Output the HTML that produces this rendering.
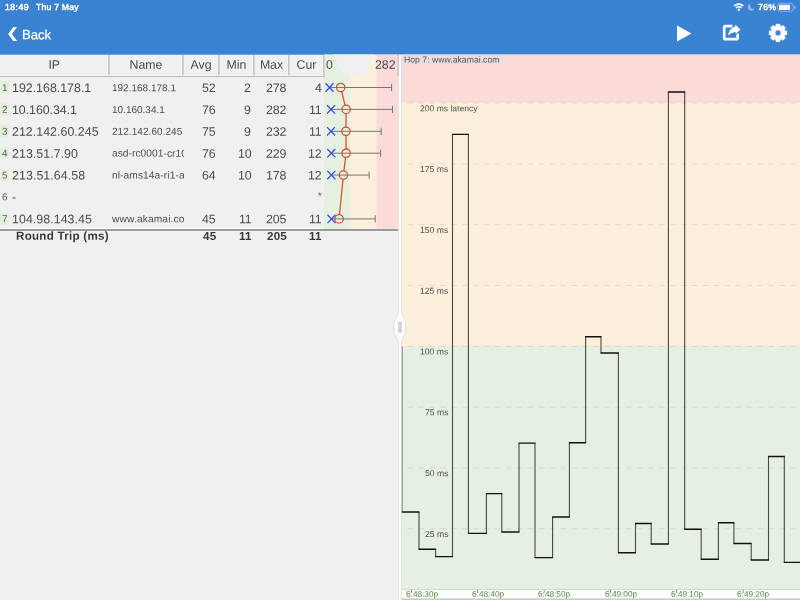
<!DOCTYPE html>
<html lang="en"><head><meta charset="utf-8"><title>Hop 7: www.akamai.com</title>
<style>
html,body{margin:0;padding:0;}
body{width:800px;height:600px;overflow:hidden;background:#f0f0f0;font-family:"Liberation Sans",sans-serif;position:relative;color:#4a4a4a;}
.abs{position:absolute;white-space:nowrap;}
.hop{left:0;width:9.1px;height:12.6px;border-radius:0 2px 2px 0;background:#e4f0dc;font-size:10px;line-height:13.4px;text-align:center;color:#666;}
svg{position:absolute;left:0;top:0;}
.t{position:absolute;top:0;white-space:nowrap;line-height:14px;}
#txt{position:absolute;left:0;top:0;width:800px;height:600px;will-change:transform;}
</style></head>
<body>
<svg width="800" height="600" viewBox="0 0 800 600">
<rect x="0" y="0" width="800" height="54.7" fill="#3a82d2"/>
<rect x="324" y="54.5" width="25.8" height="174.5" fill="#e6f0e0"/>
<rect x="349.8" y="54.5" width="26.7" height="174.5" fill="#fcefdc"/>
<rect x="376.5" y="54.5" width="21.5" height="174.5" fill="#fadbd8"/>
<polygon points="333,54.5 373.8,54.5 365,75.2 343.8,75.2" fill="#f0f0f0"/>
<rect x="107.3" y="55.2" width="1" height="20.8" fill="#f8f8f8"/>
<rect x="108.3" y="55.2" width="1.2" height="21" fill="#b6b6b6"/>
<rect x="181.3" y="55.2" width="1" height="20.8" fill="#f8f8f8"/>
<rect x="182.3" y="55.2" width="1.2" height="21" fill="#b6b6b6"/>
<rect x="217.3" y="55.2" width="1" height="20.8" fill="#f8f8f8"/>
<rect x="218.3" y="55.2" width="1.2" height="21" fill="#b6b6b6"/>
<rect x="252.3" y="55.2" width="1" height="20.8" fill="#f8f8f8"/>
<rect x="253.3" y="55.2" width="1.2" height="21" fill="#b6b6b6"/>
<rect x="287.3" y="55.2" width="1" height="20.8" fill="#f8f8f8"/>
<rect x="288.3" y="55.2" width="1.2" height="21" fill="#b6b6b6"/>
<rect x="322.3" y="55.2" width="1" height="20.8" fill="#f8f8f8"/>
<rect x="323.3" y="55.2" width="1.2" height="21" fill="#b6b6b6"/>
<rect x="0" y="75.3" width="323.5" height="1" fill="#f6f6f6"/>
<rect x="0" y="76.1" width="324.5" height="1.2" fill="#b6b6b6"/>
<rect x="0" y="77.3" width="323.5" height="1" fill="#f6f6f6"/>
<rect x="0" y="228" width="324" height="1.4" fill="#f8f8f8"/>
<rect x="0" y="229.4" width="398" height="1.4" fill="#666"/>
<rect x="0" y="230.8" width="398" height="0.7" fill="#f8f8f8"/>
<rect x="401.5" y="54.5" width="398.5" height="48.3" fill="#fadbd8"/>
<rect x="401.5" y="102.8" width="398.5" height="243.5" fill="#fcefdc"/>
<rect x="401.5" y="346.3" width="398.5" height="243.1" fill="#e6f0e0"/>
<rect x="401.5" y="589.4" width="398.5" height="10.6" fill="#fff"/>
<rect x="401.5" y="589" width="398.5" height="0.8" fill="#c8d0c4"/>
<rect x="401.5" y="598.6" width="398.5" height="1" fill="#aaa"/>
<rect x="401.5" y="54.7" width="100.6" height="9.2" fill="#e4dede"/>
<line x1="407.4" y1="528.8" x2="796.2" y2="528.8" stroke="rgba(110,110,110,0.17)" stroke-width="1" stroke-dasharray="5.6 5.34"/>
<line x1="407.4" y1="468.0" x2="796.2" y2="468.0" stroke="rgba(110,110,110,0.17)" stroke-width="1" stroke-dasharray="5.6 5.34"/>
<line x1="407.4" y1="407.2" x2="796.2" y2="407.2" stroke="rgba(110,110,110,0.17)" stroke-width="1" stroke-dasharray="5.6 5.34"/>
<line x1="407.4" y1="346.4" x2="796.2" y2="346.4" stroke="rgba(110,110,110,0.17)" stroke-width="1" stroke-dasharray="5.6 5.34"/>
<line x1="407.4" y1="285.5" x2="796.2" y2="285.5" stroke="rgba(110,110,110,0.17)" stroke-width="1" stroke-dasharray="5.6 5.34"/>
<line x1="407.4" y1="224.7" x2="796.2" y2="224.7" stroke="rgba(110,110,110,0.17)" stroke-width="1" stroke-dasharray="5.6 5.34"/>
<line x1="407.4" y1="163.9" x2="796.2" y2="163.9" stroke="rgba(110,110,110,0.17)" stroke-width="1" stroke-dasharray="5.6 5.34"/>
<line x1="407.4" y1="103.1" x2="796.2" y2="103.1" stroke="rgba(110,110,110,0.17)" stroke-width="1" stroke-dasharray="5.6 5.34"/>
<rect x="411.0" y="589.7" width="0.9" height="3.1" fill="#808080"/>
<rect x="477.3" y="589.7" width="0.9" height="3.1" fill="#808080"/>
<rect x="543.7" y="589.7" width="0.9" height="3.1" fill="#808080"/>
<rect x="610.0" y="589.7" width="0.9" height="3.1" fill="#808080"/>
<rect x="676.3" y="589.7" width="0.9" height="3.1" fill="#808080"/>
<rect x="742.6" y="589.7" width="0.9" height="3.1" fill="#808080"/>
<path d="M401.9,346.5V512M419,512V549.2M435.6,549.2V556.6M452.5,556.6V134.4M468.4,134.4V533.4M486.4,533.4V493.6M501.8,493.6V532M519,532V443.1M535,443.1V557.6M552.6,557.6V517M569.4,517V442.7M585.6,442.7V336.8M601,336.8V353M618.4,353V552.8M635.5,552.8V523.5M651.2,523.5V544M668.4,544V92M684.7,92V529.3M701.2,529.3V559.2M718.4,559.2V522.7M733.9,522.7V543.5M751.2,543.5V560M768.5,560V456.5M784.3,456.5V562.4" stroke="#484848" stroke-width="1.1" fill="none"/>
<path d="M401.4,512H419.5M418.5,549.2H436.1M435.1,556.6H453.0M452.0,134.4H468.9M467.9,533.4H486.9M485.9,493.6H502.3M501.3,532H519.5M518.5,443.1H535.5M534.5,557.6H553.1M552.1,517H569.9M568.9,442.7H586.1M585.1,336.8H601.5M600.5,353H618.9M617.9,552.8H636.0M635.0,523.5H651.7M650.7,544H668.9M667.9,92H685.2M684.2,529.3H701.7M700.7,559.2H718.9M717.9,522.7H734.4M733.4,543.5H751.7M750.7,560H769.0M768.0,456.5H784.8M783.8,562.4H801.5" stroke="#111" stroke-width="1.4" fill="none"/>
<rect x="398.6" y="54.7" width="2.9" height="545.3" fill="#fcfcfc"/>
<rect x="401.2" y="54.5" width="0.6" height="545.5" fill="#d4d4d4"/>
<rect x="398" y="76.3" width="0.7" height="524" fill="#dedede"/>
<rect x="397.6" y="55" width="1" height="21.3" fill="#b4b4b4"/>
<path d="M398.3,310.5 C398.3,316.5 393.8,317.5 393.8,327 C393.8,336.5 398.3,337.5 398.3,343.5 L401.5,343.5 C401.5,337.5 406,336.5 406,327 C406,317.5 401.5,316.5 401.5,310.5 Z" fill="#fbfbfb"/>
<path d="M398.3,310.5 C398.3,316.5 393.8,317.5 393.8,327 C393.8,336.5 398.3,337.5 398.3,343.5 M401.5,343.5 C401.5,337.5 406,336.5 406,327 C406,317.5 401.5,316.5 401.5,310.5" fill="none" stroke="#d6d6d6" stroke-width="0.7"/>
<rect x="398.2" y="322" width="3.6" height="10.5" fill="#d2d2d2"/>
<path d="M329.5,87.5H391.6M391.6,83.9V91.1" stroke="#777" stroke-width="1" fill="none"/>
<path d="M331.0,109.4H392.5M392.5,105.8V113.0" stroke="#777" stroke-width="1" fill="none"/>
<path d="M331.0,131.3H381.2M381.2,127.7V134.9" stroke="#777" stroke-width="1" fill="none"/>
<path d="M331.3,153.2H380.6M380.6,149.6V156.8" stroke="#777" stroke-width="1" fill="none"/>
<path d="M331.3,175.1H369.1M369.1,171.5V178.7" stroke="#777" stroke-width="1" fill="none"/>
<path d="M331.5,218.9H375.2M375.2,215.3V222.5" stroke="#777" stroke-width="1" fill="none"/>
<path d="M341.7,91.6L345.1,105.3M346.1,113.6L345.9,127.1M345.9,135.5L346.1,149.0M345.6,157.4L343.9,170.9M343.0,179.3L339.5,214.7" stroke="#e0502c" stroke-width="1.3" fill="none"/>
<path d="M325.5,83.3L333.5,91.7M325.5,91.7L333.5,83.3" stroke="#2a4cf0" stroke-width="1.25" fill="none"/>
<path d="M327.0,105.2L335.0,113.6M327.0,113.6L335.0,105.2" stroke="#2a4cf0" stroke-width="1.25" fill="none"/>
<path d="M327.0,127.1L335.0,135.5M327.0,135.5L335.0,127.1" stroke="#2a4cf0" stroke-width="1.25" fill="none"/>
<path d="M327.3,149.0L335.3,157.4M327.3,157.4L335.3,149.0" stroke="#2a4cf0" stroke-width="1.25" fill="none"/>
<path d="M327.3,170.9L335.3,179.3M327.3,179.3L335.3,170.9" stroke="#2a4cf0" stroke-width="1.25" fill="none"/>
<path d="M327.5,214.7L335.5,223.1M327.5,223.1L335.5,214.7" stroke="#2a4cf0" stroke-width="1.25" fill="none"/>
<circle cx="340.7" cy="87.5" r="4.2" fill="none" stroke="#e0502c" stroke-width="1.3"/>
<circle cx="346.1" cy="109.4" r="4.2" fill="none" stroke="#e0502c" stroke-width="1.3"/>
<circle cx="345.9" cy="131.3" r="4.2" fill="none" stroke="#e0502c" stroke-width="1.3"/>
<circle cx="346.1" cy="153.2" r="4.2" fill="none" stroke="#e0502c" stroke-width="1.3"/>
<circle cx="343.4" cy="175.1" r="4.2" fill="none" stroke="#e0502c" stroke-width="1.3"/>
<circle cx="339.1" cy="218.9" r="4.2" fill="none" stroke="#e0502c" stroke-width="1.3"/>
<polygon points="13.3,27.1 17.1,27.1 11.9,34.05 17.1,41 13.3,41 8.2,34.05" fill="#fff"/>
<polygon points="677,25.5 677,41.5 691.5,33.5" fill="#fff"/>
<path d="M732.6,26.2 H725.4 Q724.2,26.2 724.2,27.4 V38 Q724.2,39.2 725.4,39.2 H736.4 Q737.6,39.2 737.6,38 V33.6" fill="none" stroke="#fff" stroke-width="2.7"/>
<path d="M728.1,35.6 C728.8,30.8 731.4,27.4 735.4,26.6 L735.4,24.6 L740.4,29.4 L735.8,34 L735.8,32.2 C732.8,32 730.4,33.2 728.1,35.6 Z" fill="#fff" stroke="#3a82d2" stroke-width="1.6" paint-order="stroke"/>
<path d="M784.86,30.70 L786.87,30.87 L786.87,34.93 L784.86,35.10 L784.40,36.20 L785.71,37.74 L782.84,40.61 L781.30,39.30 L780.20,39.76 L780.03,41.77 L775.97,41.77 L775.80,39.76 L774.70,39.30 L773.16,40.61 L770.29,37.74 L771.60,36.20 L771.14,35.10 L769.13,34.93 L769.13,30.87 L771.14,30.70 L771.60,29.60 L770.29,28.06 L773.16,25.19 L774.70,26.50 L775.80,26.04 L775.97,24.03 L780.03,24.03 L780.20,26.04 L781.30,26.50 L782.84,25.19 L785.71,28.06 L784.40,29.60 Z M780.8,32.9 A2.8,2.8 0 1,0 775.2,32.9 A2.8,2.8 0 1,0 780.8,32.9 Z" fill="#fff" fill-rule="evenodd" stroke="#fff" stroke-width="0.4" stroke-linejoin="round"/>
<g fill="none" stroke="#fff" stroke-linecap="butt"><path d="M734.2,6 A6.6,6.6 0 0,1 743.4,6" stroke-width="1.7"/><path d="M736,8 A4,4 0 0,1 741.6,8" stroke-width="1.6"/></g><circle cx="738.8" cy="9.8" r="1.2" fill="#fff"/>
<path d="M750.3,3.8 A3.5,3.5 0 1,0 754.4,8.6 A3.6,3.6 0 0,1 750.3,3.8 Z" fill="#8fb6e6"/>
<rect x="777.6" y="3.3" width="15.6" height="8" rx="2.2" fill="none" stroke="#9fc0ea" stroke-width="0.8"/><rect x="778.9" y="4.7" width="11.2" height="5.3" rx="1.2" fill="#fff"/><rect x="794.3" y="5.8" width="1.2" height="3" rx="0.6" fill="#9fc0ea"/>
</svg>
<div id="txt">
<div class="t" style="font-size:8.8px;color:#fff;left:4.50px;transform:matrix(1,0.0005,0,1,0,-0.05);letter-spacing:0.42px;-webkit-text-stroke:0.45px #fff;">18:49</div>
<div class="t" style="font-size:8.6px;color:#fff;left:36.10px;transform:matrix(1,0.0005,0,1,0,0.02);letter-spacing:0.24px;-webkit-text-stroke:0.45px #fff;">Thu 7 May</div>
<div class="t" style="font-size:8.7px;color:#fff;left:758.00px;transform:matrix(1,0.0005,0,1,0,-0.01);letter-spacing:0.3px;-webkit-text-stroke:0.45px #fff;">76%</div>
<div class="t" style="font-size:13.2px;color:#fff;left:21.90px;transform:matrix(1,0.0005,0,1,0,28.13);letter-spacing:-0.1px;-webkit-text-stroke:0.25px #fff;">Back</div>
<div class="t" style="font-size:12.3px;color:#4a4a4a;left:0.00px;width:108.50px;text-align:center;transform:matrix(1,0.0005,0,1,0,57.64);">IP</div>
<div class="t" style="font-size:12.3px;color:#4a4a4a;left:108.50px;width:74.00px;text-align:center;transform:matrix(1,0.0005,0,1,0,57.64);">Name</div>
<div class="t" style="font-size:12.3px;color:#4a4a4a;left:182.50px;width:36.00px;text-align:center;transform:matrix(1,0.0005,0,1,0,57.64);">Avg</div>
<div class="t" style="font-size:12.3px;color:#4a4a4a;left:218.50px;width:35.00px;text-align:center;transform:matrix(1,0.0005,0,1,0,57.64);">Min</div>
<div class="t" style="font-size:12.3px;color:#4a4a4a;left:253.50px;width:35.00px;text-align:center;transform:matrix(1,0.0005,0,1,0,57.64);">Max</div>
<div class="t" style="font-size:12.3px;color:#4a4a4a;left:288.50px;width:35.00px;text-align:center;transform:matrix(1,0.0005,0,1,0,57.64);">Cur</div>
<div class="t" style="font-size:12.3px;color:#4a4a4a;left:325.80px;transform:matrix(1,0.0005,0,1,0,57.64);">0</div>
<div class="t" style="font-size:12.3px;color:#4a4a4a;left:375.40px;transform:matrix(1,0.0005,0,1,0,57.64);">282</div>
<div class="abs hop" style="top:81.2px;"></div>
<div class="t" style="font-size:9.9px;color:#5c5c5c;left:0.00px;width:9.40px;text-align:center;transform:matrix(1,0.0005,0,1,0,81.02);">1</div>
<div class="t" style="font-size:12.4px;color:#4a4a4a;left:12.00px;transform:matrix(1,0.0005,0,1,0,81.10);letter-spacing:0.0px;">192.168.178.1</div>
<div class="t" style="font-size:10px;color:#4a4a4a;left:111.60px;transform:matrix(1,0.0005,0,1,0,81.14);width:72px;overflow:hidden;letter-spacing:0px;">192.168.178.1</div>
<div class="t" style="font-size:12.35px;color:#4a4a4a;right:584.00px;transform:matrix(1,0.0005,0,1,0,81.12);letter-spacing:-0.1px;">52</div>
<div class="t" style="font-size:12.35px;color:#4a4a4a;right:548.80px;transform:matrix(1,0.0005,0,1,0,81.12);letter-spacing:-0.1px;">2</div>
<div class="t" style="font-size:12.35px;color:#4a4a4a;right:513.50px;transform:matrix(1,0.0005,0,1,0,81.12);letter-spacing:-0.1px;">278</div>
<div class="t" style="font-size:12.35px;color:#4a4a4a;right:478.50px;transform:matrix(1,0.0005,0,1,0,81.12);letter-spacing:-0.1px;">4</div>
<div class="abs hop" style="top:103.1px;"></div>
<div class="t" style="font-size:9.9px;color:#5c5c5c;left:0.00px;width:9.40px;text-align:center;transform:matrix(1,0.0005,0,1,0,102.87);">2</div>
<div class="t" style="font-size:12.4px;color:#4a4a4a;left:12.00px;transform:matrix(1,0.0005,0,1,0,102.95);letter-spacing:-0.05px;">10.160.34.1</div>
<div class="t" style="font-size:10px;color:#4a4a4a;left:111.60px;transform:matrix(1,0.0005,0,1,0,102.98);width:72px;overflow:hidden;letter-spacing:0px;">10.160.34.1</div>
<div class="t" style="font-size:12.35px;color:#4a4a4a;right:584.00px;transform:matrix(1,0.0005,0,1,0,102.97);letter-spacing:-0.1px;">76</div>
<div class="t" style="font-size:12.35px;color:#4a4a4a;right:548.80px;transform:matrix(1,0.0005,0,1,0,102.97);letter-spacing:-0.1px;">9</div>
<div class="t" style="font-size:12.35px;color:#4a4a4a;right:513.50px;transform:matrix(1,0.0005,0,1,0,102.97);letter-spacing:-0.1px;">282</div>
<div class="t" style="font-size:12.35px;color:#4a4a4a;right:478.50px;transform:matrix(1,0.0005,0,1,0,102.97);letter-spacing:-0.1px;">11</div>
<div class="abs hop" style="top:125.0px;"></div>
<div class="t" style="font-size:9.9px;color:#5c5c5c;left:0.00px;width:9.40px;text-align:center;transform:matrix(1,0.0005,0,1,0,124.72);">3</div>
<div class="t" style="font-size:12.4px;color:#4a4a4a;left:11.60px;transform:matrix(1,0.0005,0,1,0,124.80);letter-spacing:0.03px;">212.142.60.245</div>
<div class="t" style="font-size:10px;color:#4a4a4a;left:111.60px;transform:matrix(1,0.0005,0,1,0,124.84);width:72px;overflow:hidden;letter-spacing:0.06px;">212.142.60.245</div>
<div class="t" style="font-size:12.35px;color:#4a4a4a;right:584.00px;transform:matrix(1,0.0005,0,1,0,124.82);letter-spacing:-0.1px;">75</div>
<div class="t" style="font-size:12.35px;color:#4a4a4a;right:548.80px;transform:matrix(1,0.0005,0,1,0,124.82);letter-spacing:-0.1px;">9</div>
<div class="t" style="font-size:12.35px;color:#4a4a4a;right:513.50px;transform:matrix(1,0.0005,0,1,0,124.82);letter-spacing:-0.1px;">232</div>
<div class="t" style="font-size:12.35px;color:#4a4a4a;right:478.50px;transform:matrix(1,0.0005,0,1,0,124.82);letter-spacing:-0.1px;">11</div>
<div class="abs hop" style="top:146.9px;"></div>
<div class="t" style="font-size:9.9px;color:#5c5c5c;left:0.00px;width:9.40px;text-align:center;transform:matrix(1,0.0005,0,1,0,146.57);">4</div>
<div class="t" style="font-size:12.4px;color:#4a4a4a;left:11.60px;transform:matrix(1,0.0005,0,1,0,146.65);letter-spacing:0.05px;">213.51.7.90</div>
<div class="t" style="font-size:10.2px;color:#4a4a4a;left:111.60px;transform:matrix(1,0.0005,0,1,0,146.62);width:72px;overflow:hidden;letter-spacing:0.05px;">asd-rc0001-cr101</div>
<div class="t" style="font-size:12.35px;color:#4a4a4a;right:584.00px;transform:matrix(1,0.0005,0,1,0,146.67);letter-spacing:-0.1px;">76</div>
<div class="t" style="font-size:12.35px;color:#4a4a4a;right:548.80px;transform:matrix(1,0.0005,0,1,0,146.67);letter-spacing:-0.1px;">10</div>
<div class="t" style="font-size:12.35px;color:#4a4a4a;right:513.50px;transform:matrix(1,0.0005,0,1,0,146.67);letter-spacing:-0.1px;">229</div>
<div class="t" style="font-size:12.35px;color:#4a4a4a;right:478.50px;transform:matrix(1,0.0005,0,1,0,146.67);letter-spacing:-0.1px;">12</div>
<div class="abs hop" style="top:168.8px;"></div>
<div class="t" style="font-size:9.9px;color:#5c5c5c;left:0.00px;width:9.40px;text-align:center;transform:matrix(1,0.0005,0,1,0,168.42);">5</div>
<div class="t" style="font-size:12.4px;color:#4a4a4a;left:11.60px;transform:matrix(1,0.0005,0,1,0,168.50);letter-spacing:0.07px;">213.51.64.58</div>
<div class="t" style="font-size:10.2px;color:#4a4a4a;left:111.60px;transform:matrix(1,0.0005,0,1,0,168.47);width:72px;overflow:hidden;letter-spacing:0.09px;">nl-ams14a-ri1-ae</div>
<div class="t" style="font-size:12.35px;color:#4a4a4a;right:584.00px;transform:matrix(1,0.0005,0,1,0,168.52);letter-spacing:-0.1px;">64</div>
<div class="t" style="font-size:12.35px;color:#4a4a4a;right:548.80px;transform:matrix(1,0.0005,0,1,0,168.52);letter-spacing:-0.1px;">10</div>
<div class="t" style="font-size:12.35px;color:#4a4a4a;right:513.50px;transform:matrix(1,0.0005,0,1,0,168.52);letter-spacing:-0.1px;">178</div>
<div class="t" style="font-size:12.35px;color:#4a4a4a;right:478.50px;transform:matrix(1,0.0005,0,1,0,168.52);letter-spacing:-0.1px;">12</div>
<div class="abs hop" style="top:190.7px;background:none;"></div>
<div class="t" style="font-size:9.9px;color:#5c5c5c;left:0.00px;width:9.40px;text-align:center;transform:matrix(1,0.0005,0,1,0,190.27);">6</div>
<div class="t" style="font-size:12.4px;color:#4a4a4a;left:12.20px;transform:matrix(1,0.0005,0,1,0,190.35);letter-spacing:0px;">-</div>
<div class="t" style="font-size:9.5px;color:#4a4a4a;right:478.80px;transform:matrix(1,0.0005,0,1,0,189.06);">*</div>
<div class="abs hop" style="top:212.6px;"></div>
<div class="t" style="font-size:9.9px;color:#5c5c5c;left:0.00px;width:9.40px;text-align:center;transform:matrix(1,0.0005,0,1,0,212.12);">7</div>
<div class="t" style="font-size:12.4px;color:#4a4a4a;left:12.00px;transform:matrix(1,0.0005,0,1,0,212.20);letter-spacing:0.05px;">104.98.143.45</div>
<div class="t" style="font-size:10.2px;color:#4a4a4a;left:111.60px;transform:matrix(1,0.0005,0,1,0,212.17);width:72px;overflow:hidden;letter-spacing:0.14px;">www.akamai.com</div>
<div class="t" style="font-size:12.35px;color:#4a4a4a;right:584.00px;transform:matrix(1,0.0005,0,1,0,212.22);letter-spacing:-0.1px;">45</div>
<div class="t" style="font-size:12.35px;color:#4a4a4a;right:548.80px;transform:matrix(1,0.0005,0,1,0,212.22);letter-spacing:-0.1px;">11</div>
<div class="t" style="font-size:12.35px;color:#4a4a4a;right:513.50px;transform:matrix(1,0.0005,0,1,0,212.22);letter-spacing:-0.1px;">205</div>
<div class="t" style="font-size:12.35px;color:#4a4a4a;right:478.50px;transform:matrix(1,0.0005,0,1,0,212.22);letter-spacing:-0.1px;">11</div>
<div class="t" style="font-size:11.6px;color:#383838;font-weight:bold;left:15.80px;transform:matrix(1,0.0005,0,1,0,228.78);letter-spacing:0.27px;">Round Trip (ms)</div>
<div class="t" style="font-size:11.6px;color:#383838;font-weight:bold;right:583.80px;transform:matrix(1,0.0005,0,1,0,228.88);letter-spacing:0.2px;">45</div>
<div class="t" style="font-size:11.6px;color:#383838;font-weight:bold;right:548.60px;transform:matrix(1,0.0005,0,1,0,228.88);letter-spacing:0.2px;">11</div>
<div class="t" style="font-size:11.6px;color:#383838;font-weight:bold;right:513.30px;transform:matrix(1,0.0005,0,1,0,228.88);letter-spacing:0.2px;">205</div>
<div class="t" style="font-size:11.6px;color:#383838;font-weight:bold;right:478.30px;transform:matrix(1,0.0005,0,1,0,228.88);letter-spacing:0.2px;">11</div>
<div class="t" style="font-size:8.68px;color:#555;left:404.30px;transform:matrix(1,0.0005,0,1,0,52.49);">Hop 7: www.akamai.com</div>
<div class="t" style="font-size:8.65px;color:#505050;right:351.40px;transform:matrix(1,0.0005,0,1,0,526.94);">25 ms</div>
<div class="t" style="font-size:8.65px;color:#505050;right:351.40px;transform:matrix(1,0.0005,0,1,0,466.13);">50 ms</div>
<div class="t" style="font-size:8.65px;color:#505050;right:351.40px;transform:matrix(1,0.0005,0,1,0,405.32);">75 ms</div>
<div class="t" style="font-size:8.65px;color:#505050;right:351.40px;transform:matrix(1,0.0005,0,1,0,344.50);">100 ms</div>
<div class="t" style="font-size:8.65px;color:#505050;right:351.40px;transform:matrix(1,0.0005,0,1,0,283.69);">125 ms</div>
<div class="t" style="font-size:8.65px;color:#505050;right:351.40px;transform:matrix(1,0.0005,0,1,0,222.88);">150 ms</div>
<div class="t" style="font-size:8.65px;color:#505050;right:351.40px;transform:matrix(1,0.0005,0,1,0,162.07);">175 ms</div>
<div class="t" style="font-size:8.55px;color:#555;left:420.30px;transform:matrix(1,0.0005,0,1,0,101.14);">200 ms latency</div>
<div class="t" style="font-size:8.25px;color:#4f8040;left:405.70px;transform:matrix(1,0.0005,0,1,0,587.64);">6:48:30p</div>
<div class="t" style="font-size:8.25px;color:#4f8040;left:472.03px;transform:matrix(1,0.0005,0,1,0,587.64);">6:48:40p</div>
<div class="t" style="font-size:8.25px;color:#4f8040;left:538.36px;transform:matrix(1,0.0005,0,1,0,587.64);">6:48:50p</div>
<div class="t" style="font-size:8.25px;color:#4f8040;left:604.69px;transform:matrix(1,0.0005,0,1,0,587.64);">6:49:00p</div>
<div class="t" style="font-size:8.25px;color:#4f8040;left:671.02px;transform:matrix(1,0.0005,0,1,0,587.64);">6:49:10p</div>
<div class="t" style="font-size:8.25px;color:#4f8040;left:737.35px;transform:matrix(1,0.0005,0,1,0,587.64);">6:49:20p</div>
</div>
</body></html>
